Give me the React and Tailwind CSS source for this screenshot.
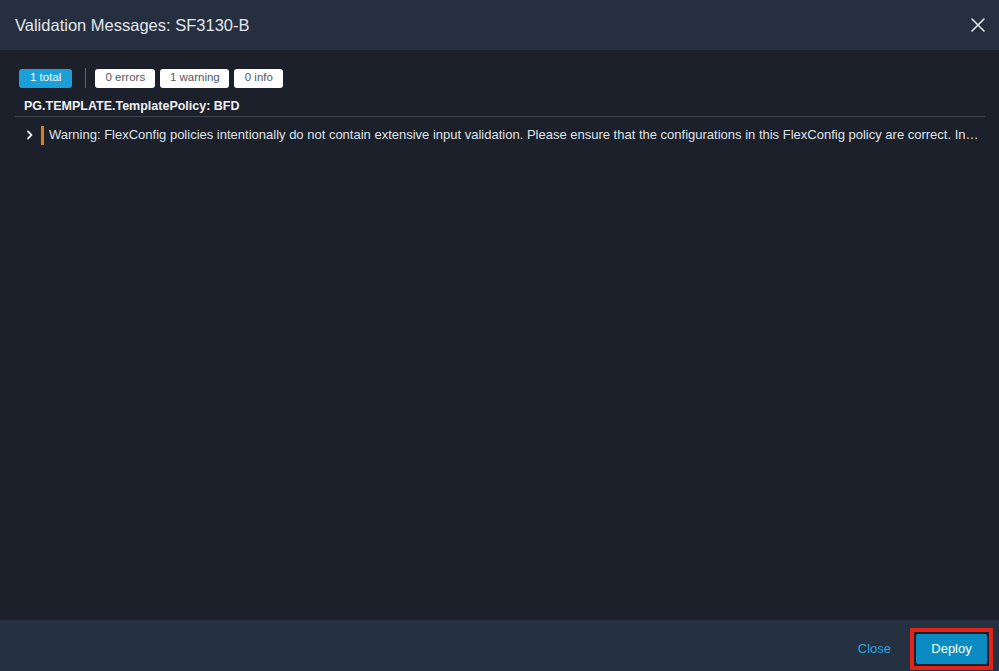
import React from "react";

export default function App() {
  return (
    <div className="w-[999px] h-[671px] flex flex-col bg-[#1b202b] overflow-hidden" style={{ fontFamily: "'Liberation Sans', Arial, sans-serif" }}>
      <div className="h-[50px] shrink-0 bg-[#252f3f] flex items-center justify-between pl-[15px] pr-[14px]">
        <div className="text-[16.5px] text-[#e3e6eb]">Validation Messages: SF3130-B</div>
        <svg width="14" height="14" viewBox="0 0 14 14" className="text-[#e3e6eb]">
          <path d="M1 1L13 13M13 1L1 13" stroke="currentColor" strokeWidth="1.6" strokeLinecap="round" />
        </svg>
      </div>
      <div className="flex-1 flex flex-col pl-[15px] pr-[14px] pt-[18px]">
        <div className="flex items-center pl-[4px] h-[20px]">
          <div className="h-[19px] px-[11px] rounded-[3px] bg-[#1c9ed8] text-white text-[11.5px] flex items-center">1 total</div>
          <div className="w-px h-[20px] bg-[#5a6270] ml-[13px] mr-[9px]"></div>
          <div className="flex gap-[5px]">
            <div className="h-[19px] w-[60px] rounded-[3px] bg-white text-[#505865] text-[11.5px] flex items-center justify-center">0 errors</div>
            <div className="h-[19px] w-[69px] rounded-[3px] bg-white text-[#505865] text-[11.5px] flex items-center justify-center">1 warning</div>
            <div className="h-[19px] w-[49px] rounded-[3px] bg-white text-[#505865] text-[11.5px] flex items-center justify-center">0 info</div>
          </div>
        </div>
        <div className="mt-[10px] pl-[9px] pb-[2px] border-b border-[#3d4553] text-[12.5px] leading-[16px] font-bold text-[#eef0f3]">PG.TEMPLATE.TemplatePolicy: BFD</div>
        <div className="flex items-center mt-[8px] h-[20px]">
          <svg width="8" height="10" viewBox="0 0 8 10" className="ml-[11px] mr-[7px] shrink-0">
            <path d="M2 1.5L5.5 5L2 8.5" stroke="#e3e6eb" strokeWidth="1.8" fill="none" strokeLinecap="round" strokeLinejoin="round" />
          </svg>
          <div className="w-[3px] h-[19px] bg-[#e07b1f] shrink-0 mr-[5px]"></div>
          <div className="text-[13px] text-[#dfe2e7] whitespace-nowrap overflow-hidden text-ellipsis">Warning: FlexConfig policies intentionally do not contain extensive input validation. Please ensure that the configurations in this FlexConfig policy are correct. Incorrect configurations could result in deployment failures.</div>
        </div>
      </div>
      <div className="h-[52px] shrink-0 bg-[#253040] border-t border-[#172230] flex items-center justify-end pr-[6px] pt-[6px]">
        <div className="text-[13px] text-[#2ba8e0] mr-[19px]">Close</div>
        <div className="border-[4px] border-[#e2231a] p-[2px] bg-[#1b202b]">
          <div className="h-[30px] w-[71px] bg-[#0a8bc1] rounded-[2px] text-white text-[13px] flex items-center justify-center">Deploy</div>
        </div>
      </div>
    </div>
  );
}
